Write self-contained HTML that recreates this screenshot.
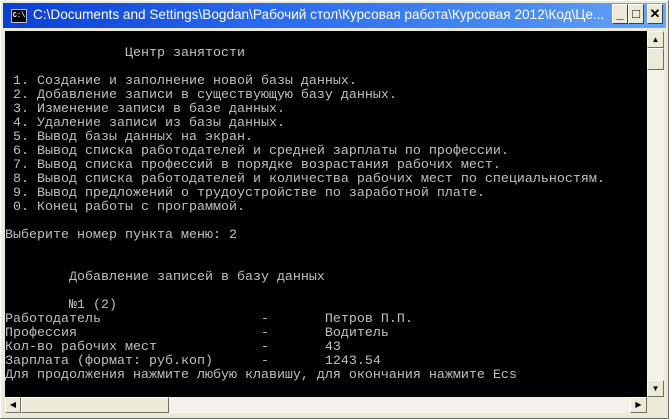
<!DOCTYPE html>
<html><head><meta charset="utf-8"><style>
*{margin:0;padding:0;box-sizing:border-box}
body{width:669px;height:419px;overflow:hidden;background:#ece9d8;position:relative;font-family:"Liberation Sans",sans-serif}
.frame{position:absolute;left:0;top:0;width:669px;height:419px;border:1px solid #fff;border-right-color:#716f64;border-bottom-color:#716f64;background:#ece9d8}
.title{position:absolute;left:3px;top:3px;width:663px;height:25px;background:linear-gradient(90deg,#0a3fd6 0%,#2a6af0 40%,#4a8cf2 80%,#6aa6f6 100%)}
.title .t{position:absolute;left:30px;top:4px;color:#fff;font-size:13.6px;white-space:nowrap;font-family:"Liberation Sans","Noto Sans CJK SC",sans-serif}
.icon{position:absolute;left:8px;top:6px;width:16px;height:14px;background:#000;border:1px solid #c0c0c0;color:#fff;font:bold 7px "Liberation Mono",monospace;line-height:12px;text-align:center}
.btn{position:absolute;top:4px;width:16px;height:20px;background:#ece9d8;border:1px solid #fff;border-right-color:#404040;border-bottom-color:#404040;font:bold 13px "Liberation Sans",sans-serif;text-align:center;line-height:18px;color:#000}
.con{position:absolute;left:5px;top:31px;width:642px;height:366px;background:#000;overflow:hidden}
pre{position:absolute;left:0;top:16px;font:13.33px/14px "Liberation Mono","DejaVu Sans Mono",monospace;color:#c0c0c0;white-space:pre}
.vs{position:absolute;left:647px;top:31px;width:17px;height:366px;background:#f3f1ea}
.hs{position:absolute;left:5px;top:397px;width:642px;height:16px;background:#f3f1ea}
.sb{position:absolute;background:#ece9d8;border:1px solid #fff;border-right-color:#716f64;border-bottom-color:#716f64;font-size:8px;text-align:center;color:#000}
</style></head><body>
<div class="frame"></div>
<div class="title"><div class="icon">C:\</div><div class="t">C:\Documents and Settings\Bogdan\Рабочий стол\Курсовая работа\Курсовая 2012\Код\Це...</div></div>
<div class="btn" style="left:612px">_</div>
<div class="btn" style="left:628px">□</div>
<div class="btn" style="left:647px">✕</div>
<div class="con"><pre>               Центр занятости

 1. Создание и заполнение новой базы данных.
 2. Добавление записи в существующую базу данных.
 3. Изменение записи в базе данных.
 4. Удаление записи из базы данных.
 5. Вывод базы данных на экран.
 6. Вывод списка работодателей и средней зарплаты по профессии.
 7. Вывод списка профессий в порядке возрастания рабочих мест.
 8. Вывод списка работодателей и количества рабочих мест по специальностям.
 9. Вывод предложений о трудоустройстве по заработной плате.
 0. Конец работы с программой.

Выберите номер пункта меню: 2


        Добавление записей в базу данных

        №1 (2)
Работодатель                    -       Петров П.П.
Профессия                       -       Водитель
Кол-во рабочих мест             -       43
Зарплата (формат: руб.коп)      -       1243.54
Для продолжения нажмите любую клавишу, для окончания нажмите Ecs</pre></div>
<div class="vs">
<div class="sb" style="left:0;top:0;width:17px;height:17px;line-height:15px">▲</div>
<div class="sb" style="left:0;top:17px;width:17px;height:22px"></div>
<div class="sb" style="left:0;top:349px;width:17px;height:17px;line-height:15px">▼</div>
</div>
<div class="hs">
<div class="sb" style="left:0;top:0;width:16px;height:16px;line-height:14px">◀</div>
<div class="sb" style="left:16px;top:0;width:148px;height:16px"></div>
<div class="sb" style="left:625px;top:0;width:17px;height:16px;line-height:14px">▶</div>
</div>
</body></html>
